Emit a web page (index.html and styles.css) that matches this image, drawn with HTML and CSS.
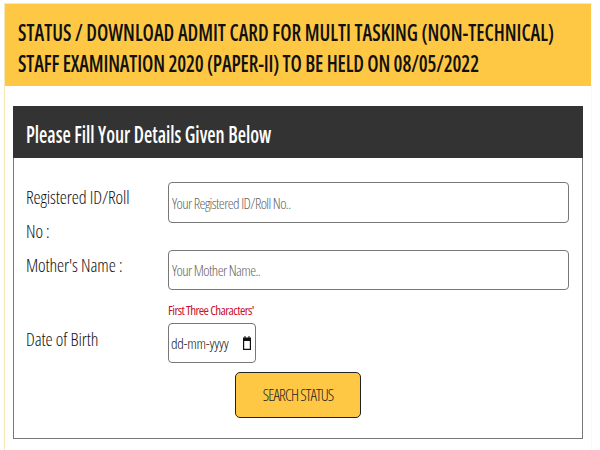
FILE: index.html
```html
<!DOCTYPE html>
<html lang="en">
<head>
    <meta charset="UTF-8">
    <meta name="viewport" content="width=device-width, initial-scale=1.0">
    <title>Status / Download Admit Card</title>
    <link rel="stylesheet" href="styles.css">
</head>
<body>
    <div class="frame">
        <header class="title-bar">
            <h1>STATUS / DOWNLOAD ADMIT CARD FOR MULTI TASKING (NON-TECHNICAL)<br><span class="title-second">STAFF EXAMINATION 2020 (PAPER-II) TO BE HELD ON 08/05/2022</span></h1>
        </header>

        <section class="panel">
            <h2 class="panel-head"><span>Please Fill Your Details Given Below</span></h2>

            <form class="details-form">
                <div class="row row-id">
                    <label class="label" for="regid">Registered ID/Roll No :</label>
                    <input class="field" id="regid" type="text" placeholder="Your Registered ID/Roll No..">
                </div>
                <div class="row row-mother">
                    <label class="label" for="mother">Mother's Name :</label>
                    <div class="field-wrap">
                        <input class="field" id="mother" type="text" placeholder="Your Mother Name..">
                        <p class="hint">First Three Characters'</p>
                    </div>
                </div>
                <div class="row row-dob">
                    <label class="label" for="dob">Date of Birth</label>
                    <div class="date-field">
                        <input class="date-input" id="dob" type="text" placeholder="dd-mm-yyyy">
                        <svg class="cal-icon" viewBox="0 0 8 14" width="8" height="14">
                            <path d="M1.5 0h1v1.5h3V0h1v1.5H8V14H0V1.5h1.5z M1.2 5v7.8h5.6V5z" fill="#111" fill-rule="evenodd"/>
                        </svg>
                    </div>
                </div>
                <div class="actions">
                    <button class="search-btn" type="button"><span>SEARCH STATUS</span></button>
                </div>
            </form>
        </section>
    </div>
</body>
</html>
```

FILE: styles.css
```css
* {
    margin: 0;
    padding: 0;
    box-sizing: border-box;
    font-family: "Open Sans", "Liberation Sans", sans-serif;
    font-stretch: 75%;
}

body {
    background: #fff;
    height: 450px;
    overflow: hidden;
}

/* outer pale frame */
.frame {
    margin: 3px 8px 0 4px;
    height: 460px;
    border: 1px solid #f5e9b8;
    border-right-color: #fdfbe0;
    border-bottom: none;
}

.title-bar {
    height: 82px;
    padding: 12px 0 0 13px;
    background: #fec845;
}

.title-bar h1 {
    font-size: 24px;
    font-weight: 600;
    line-height: 31px;
    color: #111;
    white-space: nowrap;
    transform: scaleX(0.83);
    transform-origin: left;
}

.title-second {
    letter-spacing: -0.16px;
}

.panel {
    margin: 20px 8px 0 8px;
    height: 333px;
    border: 1px solid #777;
    border-top: none;
}

.panel-head {
    height: 52px;
    margin: 0 -1px;
    padding: 0 13px;
    background: #333;
    color: #fff;
    font-size: 24px;
    font-weight: 600;
    line-height: 56px;
}

.panel-head span {
    display: inline-block;
    transform: scaleX(0.793);
    transform-origin: left;
}

.details-form {
    padding: 23px 13px 0 12px;
}

.row {
    display: flex;
    align-items: flex-start;
}

.row-id {
    height: 68px;
}

.label {
    width: 142px;
    flex: none;
    margin-top: -1px;
    padding-right: 28px;
    font-size: 18px;
    font-weight: 300;
    letter-spacing: -0.1px;
    line-height: 34px;
    color: #111;
}

.field-wrap {
    flex: 1;
}

.field {
    display: block;
    width: 401px;
    height: 41px;
    padding: 0 3px;
    margin-top: 1px;
    border: 1px solid #777;
    border-radius: 4px;
    background: #fff;
    font-size: 15px;
    font-weight: 300;
    letter-spacing: -0.6px;
}

.field::placeholder {
    color: #666;
}

.row-mother .field {
    height: 40px;
    margin-top: 1px;
}

.hint {
    margin-top: 10px;
    margin-bottom: 3px;
    font-size: 13px;
    letter-spacing: -0.6px;
    line-height: 20px;
    color: #c8102e;
}

.date-field {
    display: flex;
    align-items: center;
    width: 88px;
    height: 40px;
    padding: 0 2px 0 2px;
    border: 1px solid #777;
    border-radius: 4px;
    background: #fff;
}

.date-input {
    flex: 1;
    min-width: 0;
    border: none;
    outline: none;
    background: transparent;
    font-size: 15px;
    font-weight: 300;
    letter-spacing: -0.3px;
}

.date-input::placeholder {
    color: #111;
}

.cal-icon {
    flex: none;
    margin-right: 2px;
}

.actions {
    padding: 9px 0 0 209px;
}

.search-btn {
    width: 126px;
    height: 46px;
    border: 1px solid #222;
    border-radius: 5px;
    background: #fec845;
    color: #222;
    font-size: 16px;
    font-weight: 300;
    letter-spacing: -0.9px;
}
```
